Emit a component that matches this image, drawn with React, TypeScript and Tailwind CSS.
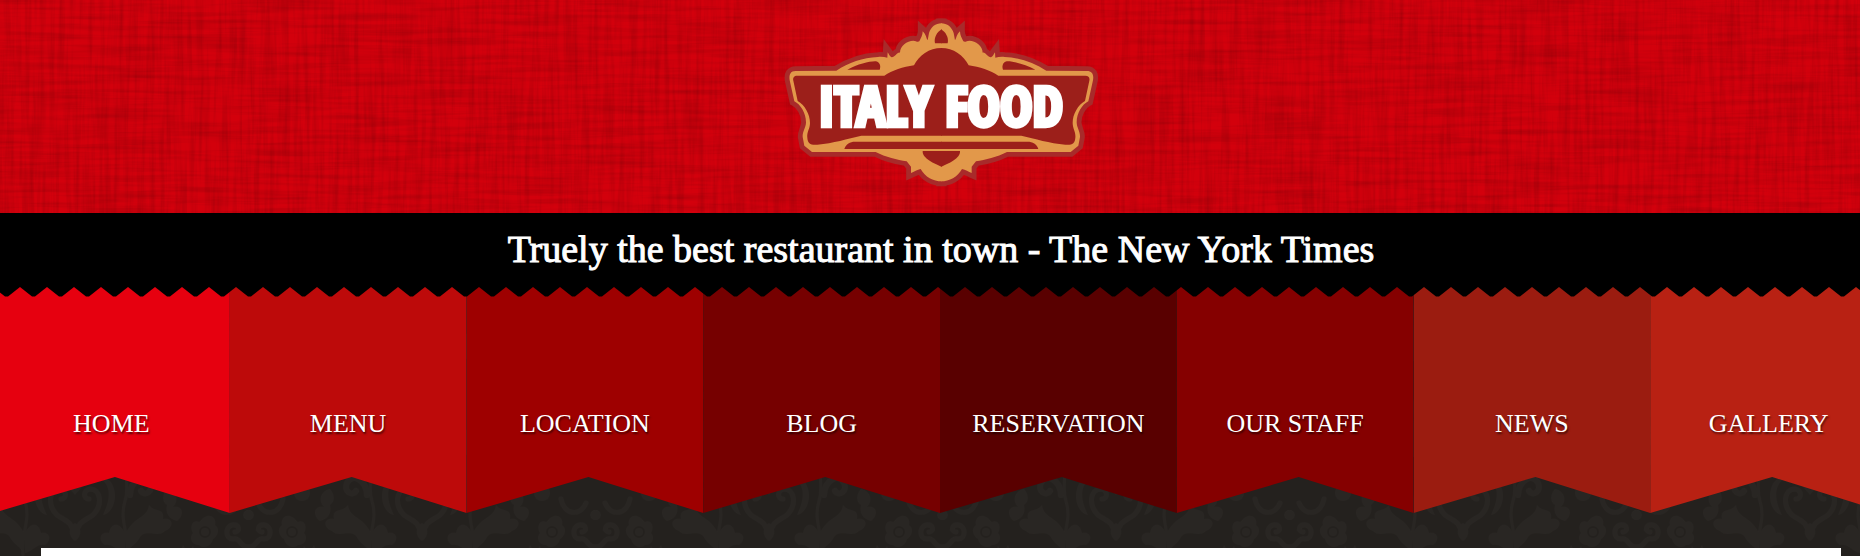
const serif = "font-['Liberation_Serif',serif]";

const navItems = [
  { label: 'HOME', color: 'bg-[#e6000f]' },
  { label: 'MENU', color: 'bg-[#bd0a0a]' },
  { label: 'LOCATION', color: 'bg-[#9e0000]' },
  { label: 'BLOG', color: 'bg-[#760000]' },
  { label: 'RESERVATION', color: 'bg-[#590000]' },
  { label: 'OUR STAFF', color: 'bg-[#850000]' },
  { label: 'NEWS', color: 'bg-[#9b1c10]' },
  { label: 'GALLERY', color: 'bg-[#b82113]' },
];

function Linen() {
  return (
    <svg aria-hidden="true" className="absolute inset-0 size-full">
      <filter id="weft" x="0" y="0" width="100%" height="100%" colorInterpolationFilters="sRGB">
        <feTurbulence type="fractalNoise" baseFrequency="0.012 0.2" numOctaves="3" seed="4" />
        <feColorMatrix values="0 0 0 0 0  0 0 0 0 0  0 0 0 0 0  0.24 0 0 0 -0.09" />
      </filter>
      <filter id="warp" x="0" y="0" width="100%" height="100%" colorInterpolationFilters="sRGB">
        <feTurbulence type="fractalNoise" baseFrequency="0.2 0.012" numOctaves="3" seed="9" />
        <feColorMatrix values="0 0 0 0 0  0 0 0 0 0  0 0 0 0 0  0.24 0 0 0 -0.09" />
      </filter>
      <rect width="100%" height="100%" filter="url(#weft)" />
      <rect width="100%" height="100%" filter="url(#warp)" />
    </svg>
  );
}

function Damask() {
  return (
    <svg aria-hidden="true" className="absolute inset-0 size-full">
      <defs>
        <g id="damask-half" fill="#292623" stroke="#292623" strokeLinecap="round">
          <path d="M0 3C6 5 10 10 8 15C5 18 3 20 0 24Z" stroke="none" />
          <path d="M2 62C3 50 10 50 18 44C28 34 26 18 15 18C8 19 8 28 14 28" fill="none" strokeWidth="5" />
          <path d="M0 52C6 56 8 64 0 70Z" stroke="none" />
          <path d="M26 8C38 16 34 32 28 44C38 42 42 28 39 18C37 10 32 6 26 8Z" stroke="none" />
          <path d="M52 84C54 60 44 50 50 30C54 18 50 8 52 0" fill="none" strokeWidth="3" />
          <path d="M55 24C56 8 70 2 75 12C79 20 70 26 66 20" fill="none" strokeWidth="6" />
          <path d="M51 62C60 44 72 48 74 34C80 42 90 36 88 48C98 46 100 56 90 60C82 68 70 56 64 68C60 74 54 76 52 82Z" stroke="none" />
          <path d="M92 18C102 20 104 30 98 36C108 34 110 44 102 50C94 48 90 42 92 34C86 30 88 22 92 18Z" stroke="none" />
          <path d="M50 62C44 50 36 52 34 62C26 60 22 68 30 74C38 72 42 80 50 82Z" stroke="none" />
          <path d="M130 46C136 42 142 48 140 54C146 58 142 66 138 68C136 76 128 78 124 74C116 74 114 66 118 62C114 56 118 48 124 51C126 50 127 47 130 46Z" stroke="none" />
          <circle cx="130" cy="61" r="5" fill="none" stroke="#24211e" strokeWidth="2" />
          <path d="M173 76C164 76 166 66 158 68C150 68 150 56 157 54C164 53 166 60 160 61" fill="none" strokeWidth="5" />
          <path d="M139 28C142 44 158 46 164 32" fill="none" strokeWidth="5" />
          <circle cx="173.5" cy="44" r="5" stroke="none" />
          <circle cx="120" cy="22" r="8" stroke="none" />
          <path d="M104 84L108 74L113 82L118 75L122 86Z" stroke="none" />
          <path d="M150 88C156 78 166 76 173 82V92Z" stroke="none" />
        </g>
        <pattern id="damask" width="347" height="96" x="75" y="184" patternUnits="userSpaceOnUse">
          <use href="#damask-half" />
          <use href="#damask-half" transform="translate(347 0) scale(-1 1)" />
        </pattern>
      </defs>
      <rect width="100%" height="100%" fill="url(#damask)" />
    </svg>
  );
}

function Teeth() {
  return (
    <svg aria-hidden="true" className="absolute inset-x-0 top-0 h-2.5 w-full">
      <defs>
        <pattern id="teeth" width="27" height="10" patternUnits="userSpaceOnUse">
          <path d="M0 0L12 9.5H15L27 0Z" fill="#000" />
        </pattern>
      </defs>
      <rect width="100%" height="100%" fill="url(#teeth)" />
    </svg>
  );
}

function Logo() {
  return (
    <svg viewBox="40 50 945 510" role="img" aria-label="Italy Food" className="relative h-[170px] w-[315px]">
      <defs>
        <path
          id="frame"
          d="M513 69C494 69 481 80 475 98L471 120C466 112 466 102 456 93C456 105 451 113 446 123C440 127 436 121 428 121C409 121 388 136 388 157C380 154 372 172 363 171C358 170 354 160 351 156L350 172C342 170 332 169 322 170C276 172 234 187 197 211L75 212C60 212 54 222 57 240L71 303C90 313 106 338 106 366C106 382 95 394 96 410L101 436L124 455H315C345 470 380 479 408 483L421 499V518C430 514 440 509 450 506C463 530 488 543 513 543Z"
        />
        <g id="panels" fill="#9c1f1a">
          <path d="M513 143C475 143 445 165 430 195C398 200 364 210 341 226H80C70 226 66 232 68 241L81 302C102 314 118 341 118 368C118 385 108 395 110 412C111 429 120 435 140 433C188 429 230 415 272 406H513Z" />
          <path d="M221 446C226 431 238 424 253 424H513V446Z" />
          <path d="M456 452H513V499C492 491 454 474 456 452Z" />
          <path d="M493 129C489 112 499 95 513 87V129Z" />
          <path d="M230 208C262 191 298 182 316 183C328 186 331 198 327 208Z" />
        </g>
      </defs>
      <g fill="#a82a2a" stroke="#a82a2a" strokeWidth="29" strokeMiterlimit="3">
        <use href="#frame" />
        <use href="#frame" transform="translate(1024 0) scale(-1 1)" />
      </g>
      <g fill="#e2984a">
        <use href="#frame" />
        <use href="#frame" transform="translate(1024 0) scale(-1 1)" />
      </g>
      <use href="#panels" />
      <use href="#panels" transform="translate(1024 0) scale(-1 1)" />
      <text
        x="510"
        y="376"
        textAnchor="middle"
        fontSize="164"
        strokeWidth="13"
        strokeLinejoin="miter"
        className="fill-white stroke-white font-['Open_Sans_Condensed','Roboto_Condensed',sans-serif] font-bold"
      >
        ITALY FOOD
      </text>
    </svg>
  );
}

export default function App() {
  return (
    <div className={`overflow-hidden bg-[#24211e] text-white ${serif}`}>
      <div className="w-[calc(100%+22px)]">
        <header className="relative flex justify-center bg-[#d3000c] pt-[17px] pb-[26px]">
          <Linen />
          <Logo />
        </header>
        <h1 className="bg-black pb-0.5 text-center text-[38px] leading-[72px] font-normal [-webkit-text-stroke:1px_white]">
          Truely the best restaurant in town - The New York Times
        </h1>
        <div className="relative">
          <Damask />
          <nav aria-label="Main" className="relative -mr-[5px] -ml-[7px]">
            <ul className="grid grid-cols-8">
              {navItems.map((item) => (
                <li key={item.label}>
                  <a
                    href={`#${item.label.toLowerCase().replace(' ', '-')}`}
                    className={`block pt-[123px] pb-[75px] text-center text-[26px] leading-7 [clip-path:polygon(0_0,100%_0,100%_100%,51.5%_calc(100%-36px),0_100%)] [text-shadow:1px_2px_2px_rgba(0,0,0,0.6)] ${item.color}`}
                  >
                    {item.label}
                  </a>
                </li>
              ))}
            </ul>
            <Teeth />
          </nav>
          <main className="relative mx-[41px] mt-[35px] h-2 bg-white" />
        </div>
      </div>
    </div>
  );
}
